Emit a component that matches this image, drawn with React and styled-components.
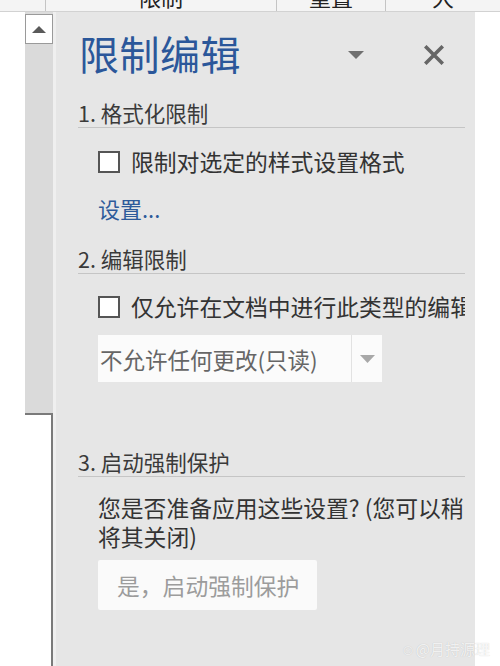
import React from 'react';
import styled, { createGlobalStyle } from 'styled-components';

const GlobalStyle = createGlobalStyle`
  html, body {
    margin: 0;
    padding: 0;
    background: #ffffff;
    font-family: "Noto Sans CJK SC", "Noto Sans", sans-serif;
  }
`;

const Page = styled.div`
  width: 500px;
  height: 666px;
  overflow: hidden;
  display: flex;
  flex-direction: column;
  background: #ffffff;
  position: relative;
`;

const TabStrip = styled.div`
  height: 11px;
  flex: none;
  display: flex;
  background: #f4f4f4;
  border-bottom: 1px solid #d2d2d2;
  overflow: hidden;
`;

const TabCell = styled.div`
  width: ${(p) => p.w}px;
  flex: none;
  box-sizing: border-box;
  display: flex;
  align-items: flex-end;
  justify-content: center;
  padding-bottom: 4px;
  border-left: ${(p) => (p.first ? 'none' : '1px solid #c4c4c4')};
  font-size: 22px;
  line-height: 22px;
  color: #222;
  white-space: nowrap;
`;

const Body = styled.div`
  flex: 1;
  display: flex;
  min-height: 0;
`;

const Gutter = styled.div`
  width: ${(p) => p.w}px;
  flex: none;
  background: #ffffff;
`;

const ScrollBar = styled.div`
  width: 28px;
  flex: none;
  display: flex;
  flex-direction: column;
  padding-top: 2px;
  background: #dcdcdc;
`;

const ScrollButton = styled.div`
  height: 30px;
  flex: none;
  box-sizing: border-box;
  border: 1px solid #9a9a9a;
  background: #ffffff;
  display: flex;
  align-items: center;
  justify-content: center;
`;

const Thumb = styled.div`
  height: 369px;
  flex: none;
  background: #dadada;
`;

const PageArea = styled.div`
  flex: 1;
  background: #ffffff;
  border-top: 2px solid #7a7a7a;
  border-right: 2px solid #7a7a7a;
`;

const Divider = styled.div`
  width: 3px;
  flex: none;
  background: #efefef;
`;

const Panel = styled.div`
  width: 419px;
  flex: none;
  box-sizing: border-box;
  background: #e6e6e6;
  padding: 19px 10px 0 23px;
  overflow: hidden;
`;

const HeaderRow = styled.div`
  display: flex;
  align-items: center;
  height: 48px;
`;

const Title = styled.div`
  flex: 1;
  font-size: 40px;
  line-height: 48px;
  color: #2b579a;
  letter-spacing: 0.5px;
  margin-top: -4px;
`;

const IconButton = styled.div`
  display: flex;
  align-items: center;
  justify-content: center;
  width: ${(p) => p.w}px;
  height: 30px;
  flex: none;
`;

const SectionTitle = styled.div`
  margin-top: ${(p) => p.top}px;
  font-size: 21.5px;
  line-height: 26px;
  color: #3a3a3a;
  padding-bottom: 1px;
  border-bottom: 1px solid #c5c5c5;
  margin-left: -1px;
  white-space: nowrap;
`;

const Indent = styled.div`
  padding-left: 19px;
  margin-top: ${(p) => p.top}px;
  overflow: hidden;
`;

const CheckRow = styled.div`
  display: flex;
  align-items: center;
  height: 30px;
  white-space: nowrap;
`;

const Box = styled.div`
  width: 22px;
  height: 22px;
  flex: none;
  box-sizing: border-box;
  border: 2px solid #555;
  background: #ffffff;
  margin-right: 11px;
`;

const Label = styled.span`
  font-size: 22.8px;
  line-height: 30px;
  color: #333;
`;

const LinkText = styled.div`
  font-size: 22px;
  line-height: 28px;
  color: #2e5b9a;
`;

const Select = styled.div`
  width: 284px;
  height: 47px;
  display: flex;
  background: #fbfbfb;
`;

const SelectText = styled.div`
  flex: 1;
  display: flex;
  align-items: center;
  padding-left: 2px;
  font-size: 22.5px;
  color: #666;
  white-space: nowrap;
  border-right: 1px solid #e2e2e2;
`;

const SelectArrow = styled.div`
  width: 30px;
  display: flex;
  align-items: center;
  justify-content: center;
`;

const Para = styled.div`
  font-size: 22.8px;
  line-height: 29px;
  height: 29px;
  color: #333;
  white-space: nowrap;
  overflow: hidden;
`;

const ActionButton = styled.div`
  margin-top: 9px;
  width: 219px;
  height: 50px;
  box-sizing: border-box;
  padding-left: 19px;
  display: flex;
  align-items: center;
  background: #fafafa;
  border-radius: 2px;
  font-size: 22.8px;
  color: #9c9c9c;
  white-space: nowrap;
`;

const Watermark = styled.div`
  position: absolute;
  right: 10px;
  top: 638px;
  font-size: 15px;
  color: rgba(255, 255, 255, 0.8);
  text-shadow: 0 0 1px rgba(0, 0, 0, 0.2);
  white-space: nowrap;
`;

const Triangle = ({ w, h, color }) => (
  <svg width={w} height={h} viewBox={`0 0 ${w} ${h}`}>
    <polygon points={`0,0 ${w},0 ${w / 2},${h}`} fill={color} />
  </svg>
);

const UpTriangle = () => (
  <svg width="14" height="7" viewBox="0 0 14 7">
    <polygon points="0,7 14,7 7,0" fill="#5a5a5a" />
  </svg>
);

const CloseIcon = () => (
  <svg width="20" height="20" viewBox="0 0 20 20">
    <path d="M2.5 2.5 L17.5 17.5 M17.5 2.5 L2.5 17.5" stroke="#666" strokeWidth="3.6" strokeLinecap="square" />
  </svg>
);

const tabs = [
  { w: 45, text: '' },
  { w: 231, text: '限制' },
  { w: 109, text: '重置' },
  { w: 115, text: '大' },
];

export default function App() {
  return (
    <Page>
      <GlobalStyle />
      <TabStrip>
        {tabs.map((t, i) => (
          <TabCell key={i} w={t.w} first={i === 0}>
            {t.text}
          </TabCell>
        ))}
      </TabStrip>
      <Body>
        <Gutter w={25} />
        <ScrollBar>
          <ScrollButton>
            <UpTriangle />
          </ScrollButton>
          <Thumb />
          <PageArea />
        </ScrollBar>
        <Divider />
        <Panel>
          <HeaderRow>
            <Title>限制编辑</Title>
            <IconButton w={30}>
              <Triangle w={16} h={8} color="#707070" />
            </IconButton>
            <IconButton w={48} />
            <IconButton w={30}>
              <CloseIcon />
            </IconButton>
            <IconButton w={16} />
          </HeaderRow>

          <SectionTitle top={21}>1. 格式化限制</SectionTitle>
          <Indent top={19}>
            <CheckRow>
              <Box />
              <Label>限制对选定的样式设置格式</Label>
            </CheckRow>
          </Indent>
          <Indent top={17}>
            <LinkText>设置...</LinkText>
          </Indent>

          <SectionTitle top={24}>2. 编辑限制</SectionTitle>
          <Indent top={18}>
            <CheckRow>
              <Box />
              <Label>仅允许在文档中进行此类型的编辑</Label>
            </CheckRow>
          </Indent>
          <Indent top={13}>
            <Select>
              <SelectText>不允许任何更改(只读)</SelectText>
              <SelectArrow>
                <Triangle w={15} h={8} color="#a8a8a8" />
              </SelectArrow>
            </Select>
          </Indent>

          <SectionTitle top={67}>3. 启动强制保护</SectionTitle>
          <Indent top={16}>
            <Para>您是否准备应用这些设置? (您可以稍</Para>
            <Para>将其关闭)</Para>
            <ActionButton>是，启动强制保护</ActionButton>
          </Indent>
        </Panel>
        <Gutter w={25} />
      </Body>
      <Watermark>☺@月持源理</Watermark>
    </Page>
  );
}
